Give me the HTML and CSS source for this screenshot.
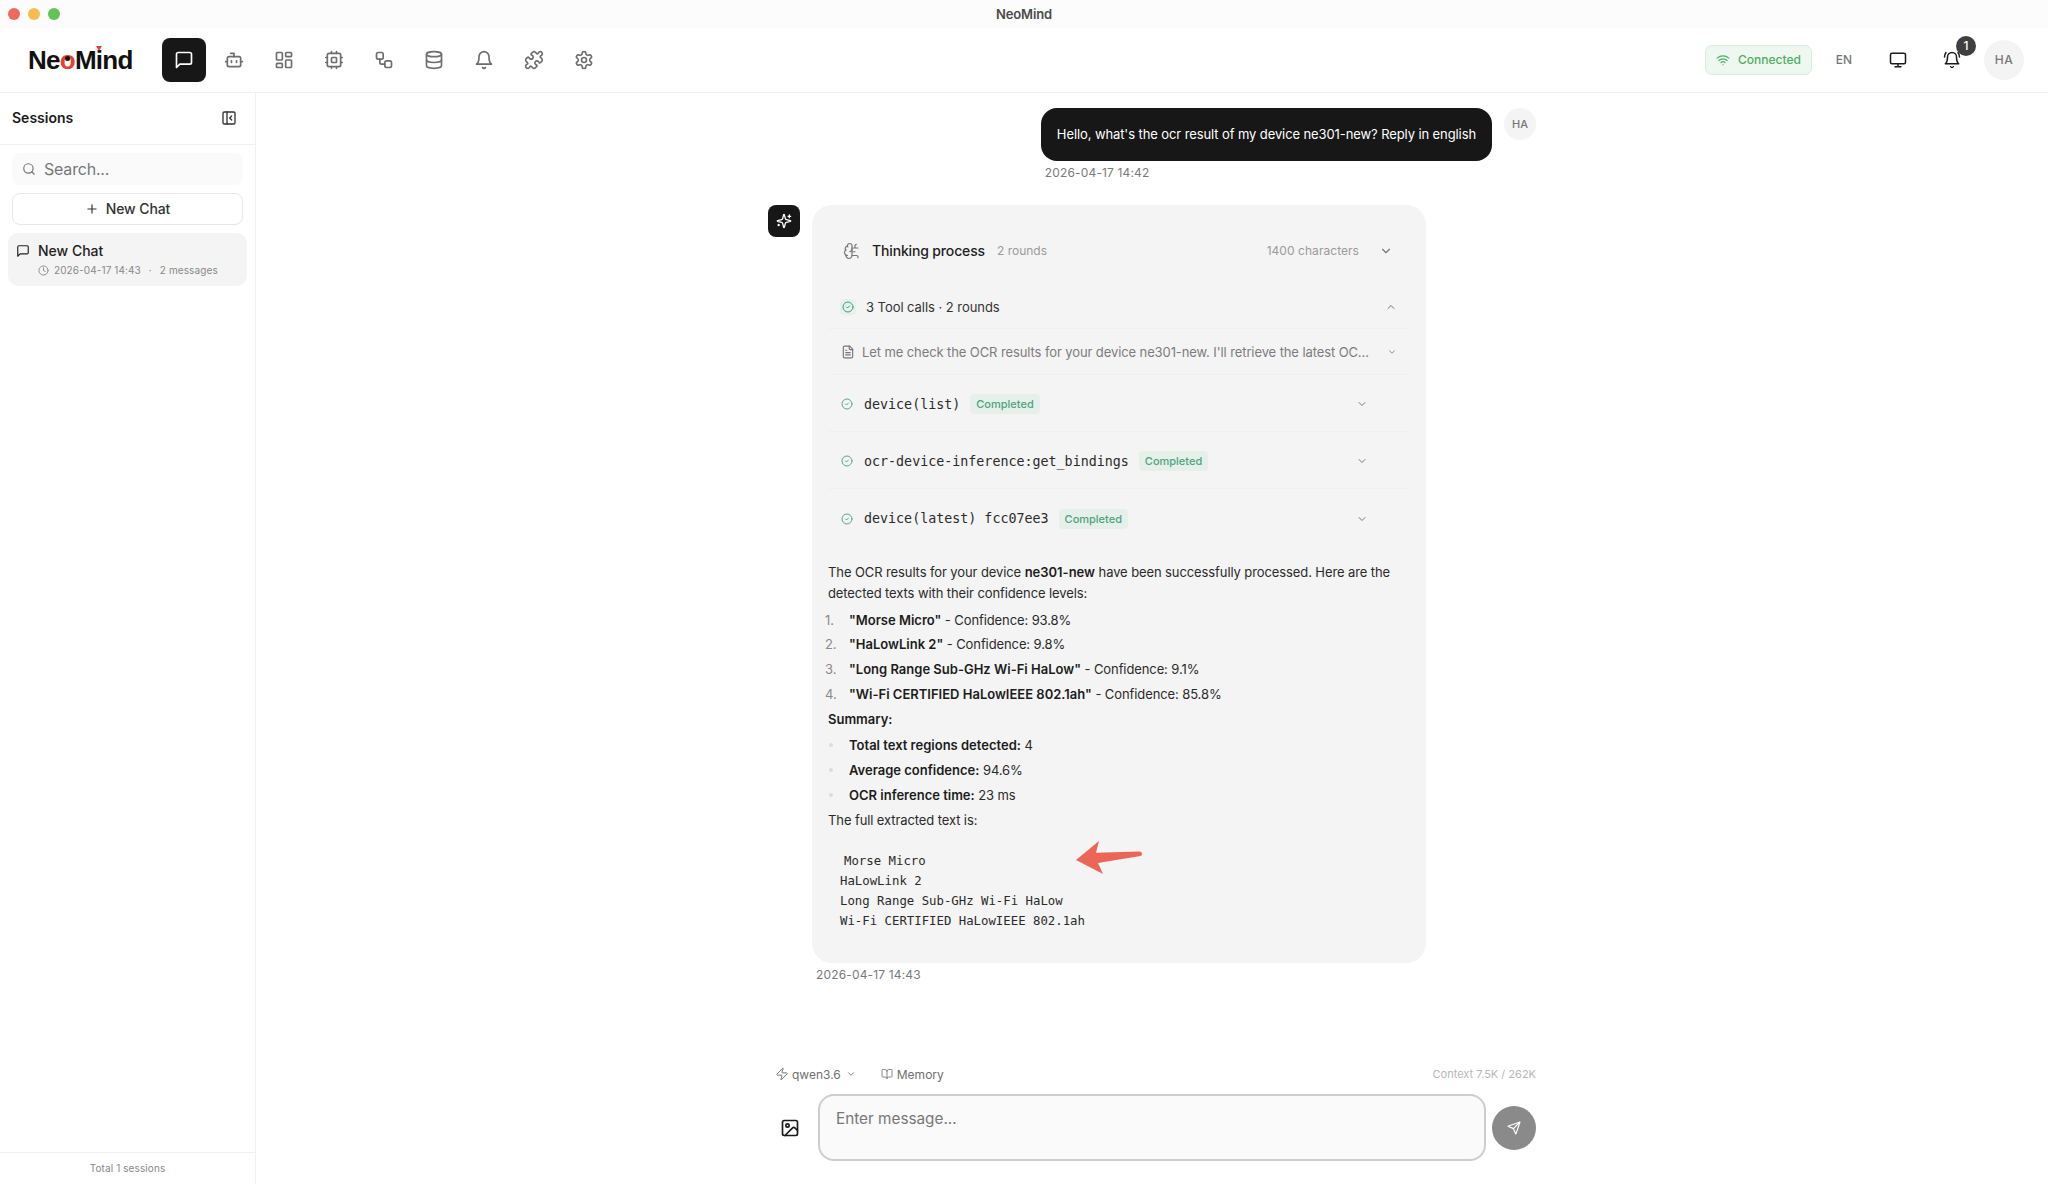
FILE: index.html
```html
<!DOCTYPE html>
<html lang="en">
<head>
<meta charset="utf-8">
<title>NeoMind</title>
<link rel="stylesheet" href="styles.css">
</head>
<body>
<svg class="defs" aria-hidden="true">
  <symbol id="i-msg" viewBox="0 0 24 24"><path d="M21 15a2 2 0 0 1-2 2H7l-4 4V5a2 2 0 0 1 2-2h14a2 2 0 0 1 2 2z"/></symbol>
  <symbol id="i-bot" viewBox="0 0 24 24"><path d="M12 8V4H8"/><rect width="16" height="12" x="4" y="8" rx="2"/><path d="M2 14h2M20 14h2M15 13v2M9 13v2"/></symbol>
  <symbol id="i-dash" viewBox="0 0 24 24"><rect width="7" height="9" x="3" y="3" rx="1"/><rect width="7" height="5" x="14" y="3" rx="1"/><rect width="7" height="9" x="14" y="12" rx="1"/><rect width="7" height="5" x="3" y="16" rx="1"/></symbol>
  <symbol id="i-cpu" viewBox="0 0 24 24"><rect width="16" height="16" x="4" y="4" rx="2"/><rect width="6" height="6" x="9" y="9" rx="1"/><path d="M15 2v2M15 20v2M2 15h2M2 9h2M20 15h2M20 9h2M9 2v2M9 20v2"/></symbol>
  <symbol id="i-flow" viewBox="0 0 24 24"><rect width="8" height="8" x="3" y="3" rx="2"/><path d="M7 11v4a2 2 0 0 0 2 2h4"/><rect width="8" height="8" x="13" y="13" rx="2"/></symbol>
  <symbol id="i-db" viewBox="0 0 24 24"><ellipse cx="12" cy="5" rx="9" ry="3"/><path d="M3 5V19A9 3 0 0 0 21 19V5"/><path d="M3 12A9 3 0 0 0 21 12"/></symbol>
  <symbol id="i-bell" viewBox="0 0 24 24"><path d="M6 8a6 6 0 0 1 12 0c0 7 3 9 3 9H3s3-2 3-9"/><path d="M10.3 21a1.94 1.94 0 0 0 3.4 0"/></symbol>
  <symbol id="i-puzzle" viewBox="0 0 24 24"><path d="M19.439 7.85c-.049.322.059.648.289.878l1.568 1.568c.47.47.706 1.087.706 1.704s-.235 1.233-.706 1.704l-1.611 1.611a.98.98 0 0 1-.837.276c-.47-.07-.802-.48-.968-.925a2.501 2.501 0 1 0-3.214 3.214c.446.166.855.497.925.968a.979.979 0 0 1-.276.837l-1.61 1.61a2.404 2.404 0 0 1-1.705.707 2.402 2.402 0 0 1-1.704-.706l-1.568-1.568a1.026 1.026 0 0 0-.877-.29c-.493.074-.84.504-1.02.968a2.5 2.5 0 1 1-3.237-3.237c.464-.18.894-.527.967-1.02a1.026 1.026 0 0 0-.289-.877l-1.568-1.568A2.402 2.402 0 0 1 1.998 12c0-.617.236-1.234.706-1.704L4.23 8.77c.24-.24.581-.353.917-.303.515.077.877.528 1.073 1.01a2.5 2.5 0 1 0 3.259-3.259c-.482-.196-.933-.558-1.01-1.073-.05-.336.062-.676.303-.917l1.525-1.525A2.402 2.402 0 0 1 12 1.998c.617 0 1.234.236 1.704.706l1.568 1.568c.23.23.556.338.877.29.493-.074.84-.504 1.02-.968a2.5 2.5 0 1 1 3.237 3.237c-.464.18-.894.527-.967 1.02Z"/></symbol>
  <symbol id="i-gear" viewBox="0 0 24 24"><path d="M12.22 2h-.44a2 2 0 0 0-2 2v.18a2 2 0 0 1-1 1.73l-.43.25a2 2 0 0 1-2 0l-.15-.08a2 2 0 0 0-2.73.73l-.22.38a2 2 0 0 0 .73 2.73l.15.1a2 2 0 0 1 1 1.72v.51a2 2 0 0 1-1 1.74l-.15.09a2 2 0 0 0-.73 2.73l.22.38a2 2 0 0 0 2.73.73l.15-.08a2 2 0 0 1 2 0l.43.25a2 2 0 0 1 1 1.73V20a2 2 0 0 0 2 2h.44a2 2 0 0 0 2-2v-.18a2 2 0 0 1 1-1.73l.43-.25a2 2 0 0 1 2 0l.15.08a2 2 0 0 0 2.73-.73l.22-.39a2 2 0 0 0-.73-2.73l-.15-.08a2 2 0 0 1-1-1.74v-.5a2 2 0 0 1 1-1.74l.15-.09a2 2 0 0 0 .73-2.73l-.22-.38a2 2 0 0 0-2.73-.73l-.15.08a2 2 0 0 1-2 0l-.43-.25a2 2 0 0 1-1-1.73V4a2 2 0 0 0-2-2z"/><circle cx="12" cy="12" r="3"/></symbol>
  <symbol id="i-panel" viewBox="0 0 24 24"><rect width="18" height="18" x="3" y="3" rx="2"/><path d="M9 3v18M16 15l-3-3 3-3"/></symbol>
  <symbol id="i-search" viewBox="0 0 24 24"><circle cx="11" cy="11" r="8"/><path d="m21 21-4.3-4.3"/></symbol>
  <symbol id="i-plus" viewBox="0 0 24 24"><path d="M5 12h14M12 5v14"/></symbol>
  <symbol id="i-clock" viewBox="0 0 24 24"><circle cx="12" cy="12" r="10"/><path d="M12 6v6l4 2"/></symbol>
  <symbol id="i-wifi" viewBox="0 0 24 24"><path d="M12 20h.01M2 8.82a15 15 0 0 1 20 0M5 12.859a10 10 0 0 1 14 0M8.5 16.429a5 5 0 0 1 7 0"/></symbol>
  <symbol id="i-monitor" viewBox="0 0 24 24"><rect width="20" height="14" x="2" y="3" rx="2"/><path d="M8 21h8M12 17v4"/></symbol>
  <symbol id="i-bellring" viewBox="0 0 24 24"><path d="M6 8a6 6 0 0 1 12 0c0 7 3 9 3 9H3s3-2 3-9"/><path d="M10.3 21a1.94 1.94 0 0 0 3.4 0M4 2C2.8 3.7 2 5.7 2 8M22 8c0-2.3-.8-4.3-2-6"/></symbol>
  <symbol id="i-spark" viewBox="0 0 24 24"><path d="M9.937 15.5A2 2 0 0 0 8.5 14.063l-6.135-1.582a.5.5 0 0 1 0-.962L8.5 9.936A2 2 0 0 0 9.937 8.5l1.582-6.135a.5.5 0 0 1 .963 0L14.063 8.5A2 2 0 0 0 15.5 9.937l6.135 1.581a.5.5 0 0 1 0 .964L15.5 14.063a2 2 0 0 0-1.437 1.437l-1.582 6.135a.5.5 0 0 1-.963 0z"/><path d="M20 3v4M22 5h-4M4 17v2M5 18H3"/></symbol>
  <symbol id="i-brain" viewBox="0 0 24 24"><path d="M12 5a3 3 0 1 0-5.997.125 4 4 0 0 0-2.526 5.77 4 4 0 0 0 .556 6.588A4 4 0 1 0 12 18Z"/><path d="M9 13a4.500 4.500 0 0 0 3-4M6.003 5.125A3 3 0 0 0 6.401 6.500M3.477 10.896a4 4 0 0 1 .585-.396M6 18a4 4 0 0 1-1.967-.516M12 13h4M12 18h6a2 2 0 0 1 2 2v1M12 8h8M16 8V5a2 2 0 0 1 2-2"/></symbol>
  <symbol id="i-check" viewBox="0 0 24 24"><circle cx="12" cy="12" r="10"/><path d="m9 12 2 2 4-4"/></symbol>
  <symbol id="i-file" viewBox="0 0 24 24"><path d="M15 2H6a2 2 0 0 0-2 2v16a2 2 0 0 0 2 2h12a2 2 0 0 0 2-2V7Z"/><path d="M14 2v4a2 2 0 0 0 2 2h4M10 9H8M16 13H8M16 17H8"/></symbol>
  <symbol id="i-down" viewBox="0 0 24 24"><path d="m6 9 6 6 6-6"/></symbol>
  <symbol id="i-up" viewBox="0 0 24 24"><path d="m18 15-6-6-6 6"/></symbol>
  <symbol id="i-zap" viewBox="0 0 24 24"><path d="M4 14a1 1 0 0 1-.78-1.630l9.900-10.200a.5.5 0 0 1 .86.46l-1.920 6.020A1 1 0 0 0 13 10h7a1 1 0 0 1 .78 1.630l-9.900 10.200a.5.5 0 0 1-.86-.46l1.920-6.020A1 1 0 0 0 11 14z"/></symbol>
  <symbol id="i-book" viewBox="0 0 24 24"><path d="M12 7v14"/><path d="M3 18a1 1 0 0 1-1-1V4a1 1 0 0 1 1-1h5a4 4 0 0 1 4 4 4 4 0 0 1 4-4h5a1 1 0 0 1 1 1v13a1 1 0 0 1-1 1h-6a3 3 0 0 0-3 3 3 3 0 0 0-3-3z"/></symbol>
  <symbol id="i-image" viewBox="0 0 24 24"><rect width="18" height="18" x="3" y="3" rx="2"/><circle cx="9" cy="9" r="2"/><path d="m21 15-3.086-3.086a2 2 0 0 0-2.828 0L6 21"/></symbol>
  <symbol id="i-send" viewBox="0 0 24 24"><path d="M14.536 21.686a.5.5 0 0 0 .937-.024l6.500-19a.496.496 0 0 0-.635-.635l-19 6.500a.5.5 0 0 0-.024.937l7.930 3.180a2 2 0 0 1 1.112 1.110z"/><path d="m21.854 2.147-10.940 10.939"/></symbol>
</svg>

<div class="app">
  <div class="titlebar">
    <div class="lights"><span class="light red"></span><span class="light yellow"></span><span class="light green"></span></div>
    <div class="wintitle">NeoMind</div>
  </div>

  <header class="topbar">
    <div class="logo">Ne<span class="logo-o">o</span>M<span class="logo-i">i</span>nd</div>
    <nav class="nav">
      <a class="nav-btn active"><svg class="ic20"><use href="#i-msg"/></svg></a>
      <a class="nav-btn"><svg class="ic20"><use href="#i-bot"/></svg></a>
      <a class="nav-btn"><svg class="ic20"><use href="#i-dash"/></svg></a>
      <a class="nav-btn"><svg class="ic20"><use href="#i-cpu"/></svg></a>
      <a class="nav-btn"><svg class="ic20"><use href="#i-flow"/></svg></a>
      <a class="nav-btn"><svg class="ic20"><use href="#i-db"/></svg></a>
      <a class="nav-btn"><svg class="ic20"><use href="#i-bell"/></svg></a>
      <a class="nav-btn"><svg class="ic20"><use href="#i-puzzle"/></svg></a>
      <a class="nav-btn"><svg class="ic20"><use href="#i-gear"/></svg></a>
    </nav>
    <div class="top-right">
      <div class="status"><svg class="ic14"><use href="#i-wifi"/></svg><span>Connected</span></div>
      <div class="lang">EN</div>
      <div class="tool-btn"><svg class="ic18 dark"><use href="#i-monitor"/></svg></div>
      <div class="tool-btn bell"><svg class="ic18 dark"><use href="#i-bellring"/></svg><span class="badge">1</span></div>
      <div class="user">HA</div>
    </div>
  </header>

  <div class="body">
    <aside class="sidebar">
      <div class="side-head"><span class="side-title">Sessions</span><svg class="ic16"><use href="#i-panel"/></svg></div>
      <div class="side-tools">
        <div class="search"><svg class="ic14"><use href="#i-search"/></svg><span>Search...</span></div>
        <div class="new-chat"><svg class="ic14"><use href="#i-plus"/></svg><span>New Chat</span></div>
      </div>
      <div class="session">
        <div class="session-name"><svg class="ic14"><use href="#i-msg"/></svg><span>New Chat</span></div>
        <div class="session-meta"><svg class="ic12"><use href="#i-clock"/></svg><span>2026-04-17 14:43</span><span class="dot">·</span><span>2 messages</span></div>
      </div>
      <div class="side-foot">Total 1 sessions</div>
    </aside>

    <main class="main">
      <div class="thread">
        <section class="msg-user">
          <div class="msg-user-col">
            <div class="bubble">Hello, what's the ocr result of my device ne301-new? Reply in english</div>
            <div class="stamp">2026-04-17 14:42</div>
          </div>
          <div class="avatar-user">HA</div>
        </section>

        <section class="msg-bot">
          <div class="avatar-bot"><svg class="ic16"><use href="#i-spark"/></svg></div>
          <div class="msg-bot-col">
            <div class="card">
              <div class="thinking">
                <svg class="ic18 grey thin"><use href="#i-brain"/></svg>
                <span class="thinking-title">Thinking process</span>
                <span class="muted">2 rounds</span>
                <span class="muted push">1400 characters</span>
                <svg class="ic14 grey chev-a"><use href="#i-down"/></svg>
              </div>
              <div class="tools-head">
                <span class="check-box"><svg class="ic12"><use href="#i-check"/></svg></span>
                <span>3 Tool calls · 2 rounds</span>
                <svg class="ic12 grey chev-b"><use href="#i-up"/></svg>
              </div>
              <div class="tool-note">
                <svg class="ic14 grey"><use href="#i-file"/></svg>
                <span>Let me check the OCR results for your device ne301-new. I'll retrieve the latest OC...</span>
                <svg class="ic10 grey chev-c"><use href="#i-down"/></svg>
              </div>
              <div class="tool-row">
                <svg class="ic12 ok"><use href="#i-check"/></svg>
                <code class="tool-name">device(list)</code><span class="done">Completed</span>
                <svg class="ic12 grey chev-d"><use href="#i-down"/></svg>
              </div>
              <div class="tool-row">
                <svg class="ic12 ok"><use href="#i-check"/></svg>
                <code class="tool-name">ocr-device-inference:get_bindings</code><span class="done">Completed</span>
                <svg class="ic12 grey chev-d"><use href="#i-down"/></svg>
              </div>
              <div class="tool-row last">
                <svg class="ic12 ok"><use href="#i-check"/></svg>
                <code class="tool-name">device(latest) fcc07ee3</code><span class="done">Completed</span>
                <svg class="ic12 grey chev-d"><use href="#i-down"/></svg>
              </div>

              <div class="answer">
                <p class="lead">The OCR results for your device <b>ne301-new</b> have been successfully processed. Here are the detected texts with their confidence levels:</p>
                <ol class="list numbers">
                  <li><b>"Morse Micro"</b> - Confidence: 93.8%</li>
                  <li><b>"HaLowLink 2"</b> - Confidence: 9.8%</li>
                  <li><b>"Long Range Sub-GHz Wi-Fi HaLow"</b> - Confidence: 9.1%</li>
                  <li><b>"Wi-Fi CERTIFIED HaLowIEEE 802.1ah"</b> - Confidence: 85.8%</li>
                </ol>
                <p class="para"><b>Summary:</b></p>
                <ul class="list bullets">
                  <li><b>Total text regions detected:</b> 4</li>
                  <li><b>Average confidence:</b> 94.6%</li>
                  <li><b>OCR inference time:</b> 23 ms</li>
                </ul>
                <p class="para">The full extracted text is:</p>
                <div class="code-wrap">
                  <pre class="code">Morse Micro
HaLowLink 2
Long Range Sub-GHz Wi-Fi HaLow
Wi-Fi CERTIFIED HaLowIEEE 802.1ah</pre>
                  <svg class="arrow" viewBox="0 0 66 33"><path d="M0 19 23 0 20 11.700 63 10.500Q66 10.700 66 13 66 15 63 15.300L22 22 27 33Z"/></svg>
                </div>
              </div>
            </div>
            <div class="stamp">2026-04-17 14:43</div>
          </div>
        </section>
      </div>

      <div class="composer">
        <div class="composer-bar">
          <span class="pick model"><svg class="ic14 thin"><use href="#i-zap"/></svg>qwen3.6<svg class="ic10 chev-m"><use href="#i-down"/></svg></span>
          <span class="pick mem"><svg class="ic12 thin"><use href="#i-book"/></svg>Memory</span>
          <span class="context">Context 7.5K / 262K</span>
        </div>
        <div class="composer-row">
          <svg class="ic20 dark attach"><use href="#i-image"/></svg>
          <div class="input">Enter message...</div>
          <div class="send"><svg class="ic14"><use href="#i-send"/></svg></div>
        </div>
      </div>
    </main>
  </div>
</div>
</body>
</html>
```

FILE: styles.css
```css
* { box-sizing: border-box; }
html, body { margin: 0; height: 100%; }
body { font-family: Inter, "Noto Sans", sans-serif; color: #1a1a1a; background: #fff; overflow: hidden; }
.defs { position: absolute; width: 0; height: 0; }
svg { fill: none; stroke: currentColor; stroke-width: 2; stroke-linecap: round; stroke-linejoin: round; flex: none; display: block; }
.thin { stroke-width: 1.6; }
.ic10 { width: 10px; height: 10px; }
.ic12 { width: 12px; height: 12px; }
.ic14 { width: 14px; height: 14px; }
.ic16 { width: 16px; height: 16px; }
.ic18 { width: 18px; height: 18px; }
.ic20 { width: 20px; height: 20px; }
.grey { color: #777; }
.dark { color: #1a1a1a; }

.app { width: 2048px; height: 1184px; display: flex; flex-direction: column; }

.titlebar { height: 28px; flex: none; background: #fcfcfc; display: flex; align-items: center; padding-left: 8px; }
.lights { display: flex; gap: 8px; }
.light { width: 12px; height: 12px; border-radius: 50%; }
.red { background: #ee6a5f; }
.yellow { background: #f5bd4f; }
.green { background: #61c454; }
.wintitle { flex: 1; text-align: center; font-size: 13px; font-weight: 600; color: #4a4a4a; margin-left: -60px; letter-spacing: -.1px; }

.topbar { height: 65px; flex: none; display: flex; align-items: center; border-bottom: 1px solid #f1f1f1; padding: 0 24px 1px 28px; }
.logo { width: 134px; flex: none; font-family: "Liberation Sans", sans-serif; font-weight: 700; font-size: 26px; letter-spacing: -.75px; color: #111; line-height: 30px; }
.logo-o { color: #e5412f; position: relative; }
.logo-o::after { content: ""; position: absolute; left: 5px; top: 11px; width: 5px; height: 5px; border-radius: 50%; background: #111; }
.logo-i { position: relative; }
.logo-i::after { content: ""; position: absolute; left: 0; top: 1px; width: 0; height: 0; border-left: 3px solid transparent; border-right: 3px solid transparent; border-top: 5px solid #e5412f; }
.nav { display: flex; gap: 6px; }
.nav-btn { width: 44px; height: 44px; border-radius: 8px; display: flex; align-items: center; justify-content: center; color: #6e6e6e; }
.nav-btn.active { background: #171717; color: #fff; }
.top-right { margin-left: auto; display: flex; align-items: center; }
.status { width: 107px; height: 30px; border: 1px solid #d7eeda; background: #eff8f0; border-radius: 7px; display: flex; align-items: center; gap: 8px; padding-left: 10px; font-size: 12px; font-weight: 500; color: #4caf61; }
.lang { width: 40px; margin-left: 12px; text-align: center; font-size: 12px; font-weight: 500; color: #777; }
.tool-btn { width: 18px; height: 18px; margin-left: 25px; position: relative; }
.tool-btn.bell { margin-left: 36px; margin-right: 23px; }
.badge { position: absolute; left: 13px; top: -15px; width: 20px; height: 20px; border-radius: 50%; background: #3f3f3f; color: #fff; font-size: 12px; font-weight: 500; display: flex; align-items: center; justify-content: center; }
.user { width: 40px; height: 40px; border-radius: 50%; background: #f4f4f4; color: #777; font-size: 12px; font-weight: 500; letter-spacing: .5px; display: flex; align-items: center; justify-content: center; }

.body { flex: 1; display: flex; min-height: 0; }
.sidebar { width: 256px; flex: none; border-right: 1px solid #f1f1f1; display: flex; flex-direction: column; }
.side-head { height: 52px; flex: none; border-bottom: 1px solid #f1f1f1; display: flex; align-items: center; justify-content: space-between; padding: 0 18px 2px 12px; color: #333; }
.side-title { font-size: 14px; font-weight: 600; color: #1a1a1a; }
.side-tools { padding: 8px 12px; display: flex; flex-direction: column; gap: 8px; }
.search { height: 32px; border-radius: 8px; background: #fafafa; display: flex; align-items: center; gap: 8px; padding-left: 10px; font-size: 16px; letter-spacing: -.2px; color: #777; }
.new-chat { height: 32px; border: 1px solid #e6e6e6; border-radius: 8px; display: flex; align-items: center; justify-content: center; gap: 7px; font-size: 14px; font-weight: 500; letter-spacing: -.1px; color: #333; padding-bottom: 1px; }
.session { margin: 0 8px; height: 53px; border-radius: 10px; background: #f4f4f4; padding: 8px 0 0 8px; }
.session-name { display: flex; align-items: center; gap: 8px; font-size: 14px; font-weight: 500; color: #222; line-height: 20px; }
.session-meta { display: flex; align-items: center; gap: 5px; margin: 2px 0 0 22px; font-size: 10px; line-height: 14px; color: #888; letter-spacing: .1px; }
.session-meta .ic12 { width: 11px; height: 11px; }
.dot { margin: 0 3px; }
.side-foot { margin-top: auto; height: 32px; border-top: 1px solid #f1f1f1; display: flex; align-items: center; justify-content: center; font-size: 10px; color: #888; padding-bottom: 2px; letter-spacing: .1px; }

.main { flex: 1; min-width: 0; display: flex; flex-direction: column; align-items: center; padding-top: 15px; }
.thread { width: 768px; flex: 1; }
.msg-user { display: flex; justify-content: flex-end; gap: 12px; }
.msg-user-col { display: flex; flex-direction: column; }
.bubble { height: 53px; padding: 0 16px; border-radius: 16px; background: #171717; color: #fff; font-size: 13px; letter-spacing: -.1px; display: flex; align-items: center; padding-bottom: 1px; }
.stamp { margin: 5px 0 0 4px; font-size: 12px; line-height: 14px; letter-spacing: .15px; color: #7a7a7a; }
.avatar-user { width: 32px; height: 32px; border-radius: 50%; background: #f4f4f4; color: #777; font-size: 11px; font-weight: 500; display: flex; align-items: center; justify-content: center; }
.msg-bot { display: flex; gap: 12px; margin-top: 25px; }
.avatar-bot { width: 32px; height: 32px; border-radius: 8px; background: #171717; color: #fff; display: flex; align-items: center; justify-content: center; }
.msg-bot-col { width: 614px; }
.card { background: #f4f4f4; border-radius: 20px; padding: 26px 16px 0; height: 758px; }

.thinking { display: flex; align-items: center; height: 40px; padding: 0 17px 1px 15px; font-size: 12px; }
.thinking-title { font-size: 14px; font-weight: 500; letter-spacing: -.15px; margin: 0 12px 0 11px; color: #1f1f1f; }
.muted { color: #9a9a9a; font-size: 12px; }
.push { margin-left: auto; letter-spacing: .05px; }
.chev-a { margin-left: 20px; }
.tools-head { display: flex; align-items: center; height: 42px; margin-top: 16px; padding: 0 13px 1px 12px; border-bottom: 1px solid #f0f0f0; font-size: 13px; letter-spacing: -.05px; color: #333; }
.check-box { width: 16px; height: 16px; border-radius: 4px; background: #e6f1ec; color: #3d9f75; display: flex; align-items: center; justify-content: center; margin-right: 10px; }
.chev-b { margin-left: auto; }
.tool-note { display: flex; align-items: center; height: 46px; padding: 0 13px 0 13px; border-bottom: 1px solid #f0f0f0; font-size: 13px; letter-spacing: -.1px; color: #7c7c7c; }
.tool-note span { margin-left: 7px; }
.chev-c { margin-left: auto; }
.tool-row { height: 57px; display: flex; align-items: center; padding: 2px 42px 0 13px; border-bottom: 1px solid #f0f0f0; }
.tool-row.last { border-bottom: 0; }
.ok { color: #5ba88a; margin-right: 11px; }
.tool-name { font-family: "DejaVu Sans Mono", "Liberation Mono", monospace; font-size: 13.33px; color: #2b2b2b; }
.done { height: 20px; padding: 0 6px; margin-left: 10px; border-radius: 4px; background: #e5f0ea; color: #4fa27e; font-size: 11px; font-weight: 500; display: flex; align-items: center; }
.chev-d { margin-left: auto; }

.answer { font-size: 13px; line-height: 20px; letter-spacing: -.1px; color: #2a2a2a; margin-top: 16px; }
.answer b { font-weight: 600; color: #1c1c1c; letter-spacing: 0; }
.lead, .para { margin: 0; }
.lead { line-height: 21px; }
.para { margin-top: 5.5px; }
.list { margin: 5.5px 0 0; padding: 0 0 0 21px; list-style: none; }
.list li { margin-bottom: 4.700px; }
.list li:last-child { margin-bottom: 0; }
.numbers { counter-reset: n; }
.numbers li { counter-increment: n; }
.numbers li::before { content: counter(n) "."; display: inline-block; width: 24px; margin-left: -24px; color: #8a8a8a; }
.bullets li { margin-bottom: 5.200px; }
.bullets li::before { content: ""; display: inline-block; width: 4px; height: 4px; margin: 0 16px 2px -20px; border-radius: 50%; background: #dcdcdc; vertical-align: middle; }
.code-wrap { position: relative; margin-top: 21px; padding-left: 12px; }
.code { margin: 0; font-family: "DejaVu Sans Mono", "Liberation Mono", monospace; font-size: 12.33px; line-height: 20px; letter-spacing: 0; color: #2a2a2a; text-indent: 4px; }
.arrow { position: absolute; left: 248px; top: -10px; width: 66px; height: 33px; fill: #ec6657; stroke: none; }

.composer { width: 768px; flex: none; padding-bottom: 23px; }
.composer-bar { display: flex; align-items: center; height: 20px; margin-bottom: 10px; padding-left: 7px; font-size: 12px; color: #6f6f6f; }
.pick { display: flex; align-items: center; gap: 4px; }
.model { gap: 3px; }
.chev-m { margin-left: 2px; }
.mem { margin-left: 25px; }
.context { margin-left: auto; font-size: 11px; color: #b8b8b8; }
.composer-row { display: flex; align-items: center; gap: 6px; }
.attach { margin: 0 12px 0 12px; }
.input { flex: 1; height: 67px; border: 2px solid #cdcdcd; border-radius: 16px; background: #fafafa; padding: 13px 16px; font-size: 15.3px; line-height: 20px; color: #777; }
.send { width: 44px; height: 44px; border-radius: 50%; background: #8a8a8a; color: #fff; display: flex; align-items: center; justify-content: center; }
```
